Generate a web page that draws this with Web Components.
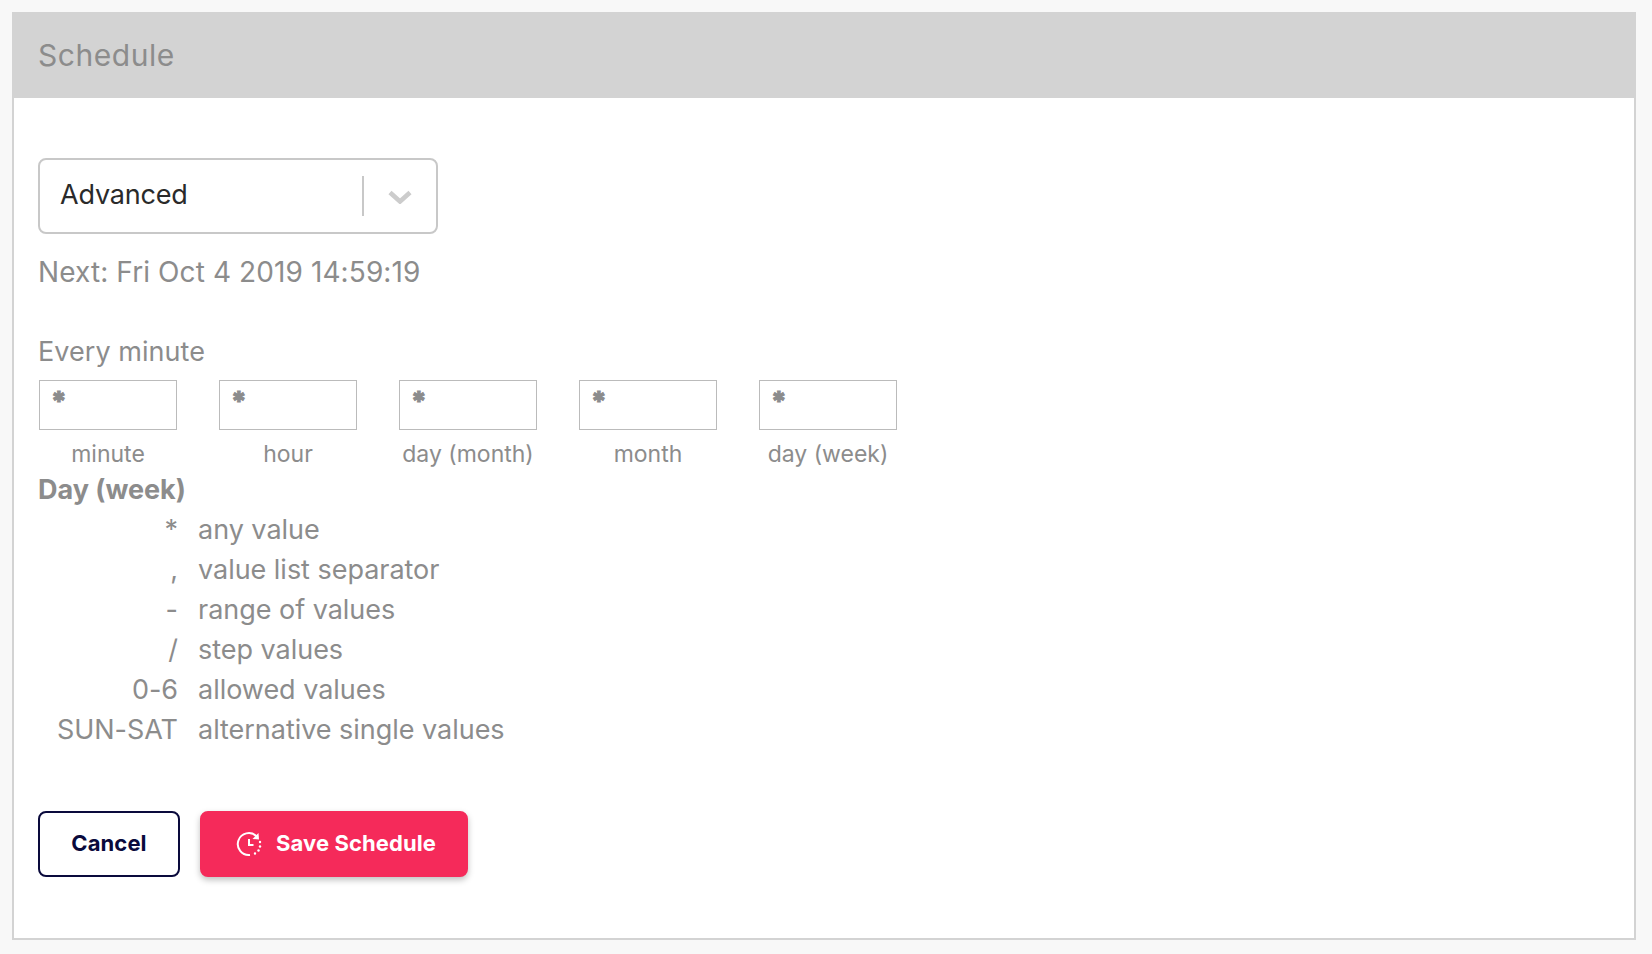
<!DOCTYPE html>
<html>
<head>
<meta charset="utf-8">
<title>Schedule</title>
<style>
  html, body { margin: 0; background: #f8f8f8; }
  body { font-family: Inter, 'Noto Sans', sans-serif; color: #8c8c8c; }
</style>
</head>
<body>
<schedule-panel heading="Schedule">
  <schedule-select value="Advanced"></schedule-select>
  <next-run>Next: Fri Oct 4 2019 14:59:19</next-run>
  <cron-editor summary="Every minute">
    <cron-field label="minute" value="*"></cron-field>
    <cron-field label="hour" value="*"></cron-field>
    <cron-field label="day (month)" value="*"></cron-field>
    <cron-field label="month" value="*"></cron-field>
    <cron-field label="day (week)" value="*"></cron-field>
  </cron-editor>
  <cron-legend heading="Day (week)">
    <cron-legend-row symbol="*" text="any value"></cron-legend-row>
    <cron-legend-row symbol="," text="value list separator"></cron-legend-row>
    <cron-legend-row symbol="-" text="range of values"></cron-legend-row>
    <cron-legend-row symbol="/" text="step values"></cron-legend-row>
    <cron-legend-row symbol="0-6" text="allowed values"></cron-legend-row>
    <cron-legend-row symbol="SUN-SAT" text="alternative single values"></cron-legend-row>
  </cron-legend>
  <form-actions>
    <action-button>Cancel</action-button>
    <action-button primary icon>Save Schedule</action-button>
  </form-actions>
</schedule-panel>

<script>
class SchedulePanel extends HTMLElement {
  constructor() {
    super();
    const root = this.attachShadow( {mode: 'open'} );
    root.innerHTML = `
      <style>
      :host {
        background: #ffffff;
        border: 2px solid #d3d3d3;
        box-sizing: border-box;
        display: block;
        height: 928px;
        margin: 12px 0 0 12px;
        width: 1624px;
      }

      h1 {
        background: #d3d3d3;
        color: #8c8c8c;
        font-size: 30px;
        font-weight: 400;
        height: 84px;
        letter-spacing: 0.55px;
        line-height: 82px;
        margin: 0;
        padding: 0 0 0 24px;
      }

      div {
        padding: 60px 24px 0 24px;
      }
      </style>
      <h1></h1>
      <div><slot></slot></div>
    `;
    root.querySelector( 'h1' ).textContent = this.getAttribute( 'heading' );
  }
}

class ScheduleSelect extends HTMLElement {
  constructor() {
    super();
    const root = this.attachShadow( {mode: 'open'} );
    root.innerHTML = `
      <style>
      :host {
        align-items: center;
        border: 2px solid #c8c8c8;
        border-radius: 8px;
        box-sizing: border-box;
        display: flex;
        height: 76px;
        width: 400px;
      }

      p {
        color: #2a2a2a;
        flex-grow: 1;
        font-size: 27px;
        letter-spacing: -0.2px;
        margin: 0;
        padding: 0 0 4px 20px;
      }

      i {
        background: #c8c8c8;
        height: 40px;
        width: 2px;
      }

      svg {
        margin: 2px 24px 0 24px;
      }
      </style>
      <p></p>
      <i></i>
      <svg width="24" height="14" viewBox="0 0 24 14">
        <path d="M2 2.5 L12 11.5 L22 2.5" fill="none" stroke="#cccccc" stroke-width="4.6"/>
      </svg>
    `;
    root.querySelector( 'p' ).textContent = this.getAttribute( 'value' );
  }
}

class NextRun extends HTMLElement {
  constructor() {
    super();
    this.attachShadow( {mode: 'open'} ).innerHTML = `
      <style>
      :host {
        display: block;
        font-size: 28px;
        letter-spacing: 0.1px;
        line-height: 40px;
        margin: 18px 0 0 0;
      }
      </style>
      <slot></slot>
    `;
  }
}

class CronEditor extends HTMLElement {
  constructor() {
    super();
    const root = this.attachShadow( {mode: 'open'} );
    root.innerHTML = `
      <style>
      :host {
        display: block;
        margin: 40px 0 0 0;
      }

      p {
        font-size: 27px;
        letter-spacing: 0.05px;
        line-height: 40px;
        margin: 0 0 8px 0;
      }

      div {
        display: flex;
        gap: 42px;
        padding: 0 0 0 1px;
      }
      </style>
      <p></p>
      <div><slot></slot></div>
    `;
    root.querySelector( 'p' ).textContent = this.getAttribute( 'summary' );
  }
}

class CronField extends HTMLElement {
  constructor() {
    super();
    const root = this.attachShadow( {mode: 'open'} );
    root.innerHTML = `
      <style>
      :host {
        display: block;
        width: 138px;
      }

      div {
        -webkit-text-stroke: 1px #8c8c8c;
        border: 1px solid #bbbbbb;
        box-sizing: border-box;
        font-size: 27px;
        font-weight: 800;
        height: 50px;
        line-height: 42px;
        padding: 0 0 0 11px;
      }

      p {
        font-size: 23px;
        line-height: 30px;
        margin: 9px 0 0 0;
        text-align: center;
      }
      </style>
      <div></div>
      <p></p>
    `;
    root.querySelector( 'div' ).textContent = this.getAttribute( 'value' );
    root.querySelector( 'p' ).textContent = this.getAttribute( 'label' );
  }
}

class CronLegend extends HTMLElement {
  constructor() {
    super();
    const root = this.attachShadow( {mode: 'open'} );
    root.innerHTML = `
      <style>
      :host {
        display: block;
        font-size: 27px;
        letter-spacing: -0.03px;
        margin: 1px 0 0 0;
      }

      h2 {
        font-size: 27px;
        font-weight: 700;
        line-height: 40px;
        margin: 0;
      }
      </style>
      <h2></h2>
      <slot></slot>
    `;
    root.querySelector( 'h2' ).textContent = this.getAttribute( 'heading' );
  }
}

class CronLegendRow extends HTMLElement {
  constructor() {
    super();
    const root = this.attachShadow( {mode: 'open'} );
    root.innerHTML = `
      <style>
      :host {
        display: grid;
        gap: 20px;
        grid-template-columns: 140px 1fr;
        line-height: 40px;
      }

      .symbol {
        text-align: right;
      }
      </style>
      <span class="symbol"></span>
      <span class="text"></span>
    `;
    root.querySelector( '.symbol' ).textContent = this.getAttribute( 'symbol' );
    root.querySelector( '.text' ).textContent = this.getAttribute( 'text' );
  }
}

class FormActions extends HTMLElement {
  constructor() {
    super();
    this.attachShadow( {mode: 'open'} ).innerHTML = `
      <style>
      :host {
        display: flex;
        gap: 20px;
        margin: 61px 0 0 0;
      }
      </style>
      <slot></slot>
    `;
  }
}

class ActionButton extends HTMLElement {
  constructor() {
    super();
    const root = this.attachShadow( {mode: 'open'} );
    const icon = this.hasAttribute( 'icon' ) ? `
      <svg width="26" height="26" viewBox="0 0 26 26">
        <path d="M20.5 5.2 A11 11 0 1 0 14 24" fill="none" stroke="#ffffff" stroke-width="2"/>
        <path d="M22.5 2 L23 8.5 L16.5 8 Z" fill="#ffffff"/>
        <circle cx="24" cy="11" r="1.2" fill="#ffffff"/>
        <circle cx="24" cy="15.5" r="1.2" fill="#ffffff"/>
        <circle cx="22.5" cy="19.5" r="1.2" fill="#ffffff"/>
        <circle cx="19" cy="22.5" r="1.2" fill="#ffffff"/>
        <path d="M13 8 V14 H17.5" fill="none" stroke="#ffffff" stroke-width="2"/>
      </svg>` : '';
    root.innerHTML = `
      <style>
      :host {
        align-items: center;
        border: 2px solid #0a0a3c;
        border-radius: 8px;
        box-sizing: border-box;
        color: #0a0a3c;
        display: flex;
        font-size: 22px;
        font-weight: 700;
        gap: 14px;
        height: 66px;
        justify-content: center;
        letter-spacing: 0.1px;
        padding: 0 0 2px 0;
        width: 142px;
      }

      :host( [primary] ) {
        background: #f52a5a;
        border-color: #f52a5a;
        box-shadow: 0 3px 6px rgba( 0, 0, 0, 0.25 );
        color: #ffffff;
        width: 268px;
      }

      svg {
        margin: 2px 0 0 4px;
      }
      </style>
      ${icon}
      <slot></slot>
    `;
  }
}

window.customElements.define( 'schedule-panel', SchedulePanel );
window.customElements.define( 'schedule-select', ScheduleSelect );
window.customElements.define( 'next-run', NextRun );
window.customElements.define( 'cron-editor', CronEditor );
window.customElements.define( 'cron-field', CronField );
window.customElements.define( 'cron-legend', CronLegend );
window.customElements.define( 'cron-legend-row', CronLegendRow );
window.customElements.define( 'form-actions', FormActions );
window.customElements.define( 'action-button', ActionButton );
</script>
</body>
</html>
